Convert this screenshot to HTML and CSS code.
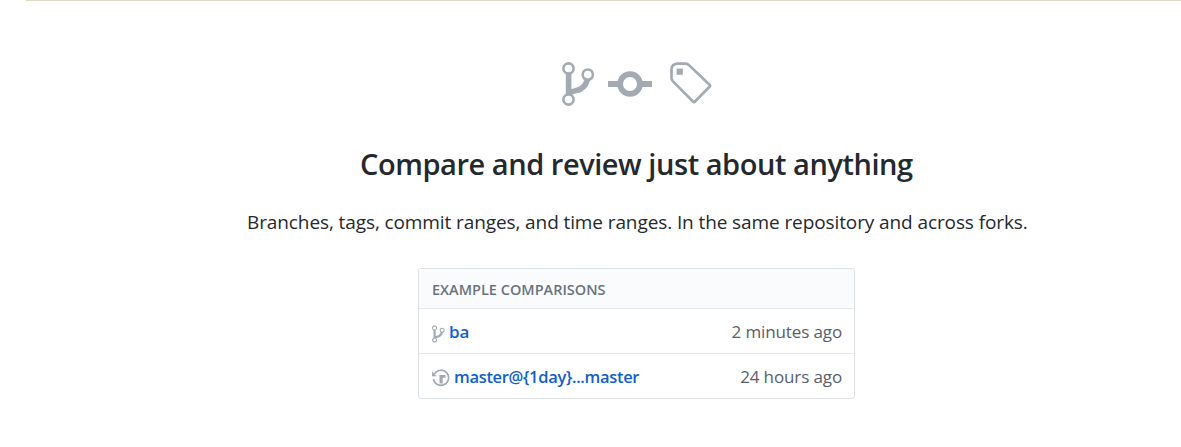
FILE: index.html
```html
<!DOCTYPE html>
<html lang="en">
<head>
<meta charset="utf-8">
<title>Compare</title>
<link rel="stylesheet" href="styles.css">
</head>
<body>
<svg class="defs" aria-hidden="true">
  <symbol id="branch" viewBox="0 0 33 44">
    <path fill="none" stroke="currentColor" stroke-width="5.600" d="M6.600 11V33M6.600 32C9 28.500 14 29.500 18.500 27C23.500 24 25.200 20 25.500 16"/>
    <g fill="#fff" stroke="currentColor" stroke-width="2.600"><circle cx="6.500" cy="6.500" r="5.100"/><circle cx="25.800" cy="12.600" r="5.100"/><circle cx="6.500" cy="37.500" r="5.100"/></g>
  </symbol>
</svg>
<main class="page">
  <div class="icons">
    <svg class="icon-branch"><use href="#branch"/></svg>
    <svg class="icon-commit" viewBox="0 0 44 44"><path fill="currentColor" d="M0 19h12v6H0zM32 19h12v6H32z"/><circle cx="22" cy="22" r="9.900" fill="none" stroke="currentColor" stroke-width="5.800"/></svg>
    <svg class="icon-tag" viewBox="0 0 42 44"><path fill="none" stroke="currentColor" stroke-width="2.700" stroke-linejoin="round" d="M7 1.600H15.500Q17.500 1.600 19 3.100L39.500 22.800Q40.500 23.800 39.500 24.800L25 39.500Q24 40.500 23 39.500L3 19.400Q1.500 17.900 1.500 15.900V7Q2 2.100 7 1.600Z"/><path fill="currentColor" d="M6.600 6.600h6.200v6.200H6.600z"/></svg>
  </div>
  <h1 class="title"><span>Compare and review just about anything</span></h1>
  <p class="lead"><span>Branches, tags, commit ranges, and time ranges. In the same repository and across forks.</span></p>
  <section class="box">
    <h2 class="box-head"><span>EXAMPLE COMPARISONS</span></h2>
    <div class="row">
      <svg class="small-branch"><use href="#branch"/></svg>
      <a class="link link-ba">ba</a>
      <span class="time time-minutes">2 minutes ago</span>
    </div>
    <div class="row">
      <svg class="small-clock" viewBox="0 0 18 18"><path fill="none" stroke="currentColor" stroke-width="1.600" d="M2.500 4.800A7.600 7.600 0 1 1 1.500 10"/><path fill="currentColor" d="M0 2.500V7.200H4.700zM7.500 6h6v2.800h-2.800V14.500H7.500z"/></svg>
      <a class="link link-master">master@{1day}...master</a>
      <span class="time time-hours">24 hours ago</span>
    </div>
  </section>
</main>
</body>
</html>
```
FILE: styles.css
```css
* { box-sizing: border-box; }
body { margin: 0; background: #fff; color: #24292e; font-family: "Open Sans", "Noto Sans", sans-serif; overflow: hidden; }
.defs { display: block; width: 0; height: 0; }
.page { margin-left: 26px; height: 447px; border-top: 1px solid #dfd8c2; display: flex; flex-direction: column; }
.icons { display: flex; margin: 61px 0 0 536px; color: #a3aab1; height: 44px; }
.icon-branch { width: 33px; height: 44px; }
.icon-commit { width: 44px; height: 44px; margin-left: 13px; }
.icon-tag { width: 42px; height: 44px; margin-left: 18px; }
.title { margin: 36px 0 0 334px; font-size: 29px; line-height: 44px; font-weight: 600; white-space: nowrap; letter-spacing: -0.45px; }
.lead { margin: 21px 0 0 221px; font-size: 19px; line-height: 30px; white-space: nowrap; letter-spacing: -0.1px; }
.box { width: 437px; height: 131px; margin: 31px 0 0 392px; border: 1px solid #dfe2e5; border-radius: 3px; overflow: hidden; }
.box-head { height: 39px; margin: 0; padding: 0 13px; background: #fafbfd; color: #6a737d; font-size: 14.5px; line-height: 41px; font-weight: 600; white-space: nowrap; }
.row { height: 45px; padding: 0 12px 0 13px; border-top: 1px solid #e6e8eb; display: flex; align-items: center; color: #a3aab1; }
.small-branch { width: 13px; height: 18px; margin-top: 5px; }
.small-clock { width: 18px; height: 18px; margin-top: 3px; }
.link { color: #0f5fd0; font-size: 17px; line-height: 44px; padding-top: 1px; font-weight: 600; margin-left: 4px; white-space: nowrap; }
.link-master { font-size: 16.5px; letter-spacing: -0.32px; }
.time { margin-left: auto; color: #586069; font-size: 17px; line-height: 44px; padding-top: 1px; white-space: nowrap; letter-spacing: -0.12px; }
```
